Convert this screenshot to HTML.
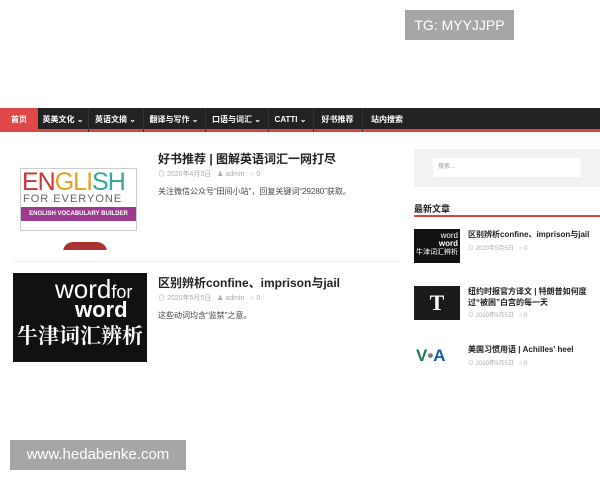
<!DOCTYPE html>
<html><head><meta charset="utf-8"><style>
*{margin:0;padding:0;box-sizing:border-box}
body{width:600px;height:480px;background:#fff;font-family:"Liberation Sans","Noto Sans CJK SC",sans-serif;position:relative;overflow:hidden}
.a{position:absolute}
.nav{left:0;top:108px;width:600px;height:24px;background:#222;border-bottom:3px solid #d44}
.nav span{position:absolute;top:0;height:24px;line-height:24px;color:#fff;font-size:8px;font-weight:bold;text-align:center}
.sep{position:absolute;top:0;width:1px;height:24px;background:#333}
.t{font-weight:bold;color:#222}
.m{color:#aaa;font-size:7px}
.e{color:#444;font-size:8px}
</style></head><body>
<div class="a" style="left:405px;top:10px;width:109px;height:30px;background:#a6a6a6;color:#fff;font-size:14px;line-height:30px;text-align:center">TG: MYYJJPP</div>
<div class="a nav">
<span style="left:0;width:38px;background:#e04848">首页</span>
<span style="left:38px;width:50px">英美文化 ⌄</span><div class="sep" style="left:88px"></div>
<span style="left:88px;width:55px">英语文摘 ⌄</span><div class="sep" style="left:143px"></div>
<span style="left:143px;width:62px">翻译与写作 ⌄</span><div class="sep" style="left:205px"></div>
<span style="left:205px;width:63px">口语与词汇 ⌄</span><div class="sep" style="left:268px"></div>
<span style="left:268px;width:45px">CATTI ⌄</span><div class="sep" style="left:313px"></div>
<span style="left:313px;width:49px">好书推荐</span><div class="sep" style="left:362px"></div>
<span style="left:362px;width:50px">站内搜索</span>
</div>
<div class="a" style="left:18px;top:149px;width:122px;height:101px;background:#fff;overflow:hidden">
<div class="a" style="left:2px;top:19px;width:117px;height:63px;border:1px solid #ccc"></div>
<div class="a" style="left:4px;top:19px;font-size:25px;color:#c33;letter-spacing:-1px">EN<span style="color:#e8a020">GLI</span><span style="color:#3a9">SH</span></div>
<div class="a" style="left:5px;top:44px;font-size:11px;color:#666;letter-spacing:1px">FOR EVERYONE</div>
<div class="a" style="left:3px;top:58px;width:115px;height:14px;background:#9b3a8e;color:#fff;font-size:6px;font-weight:bold;line-height:14px;text-align:center">ENGLISH VOCABULARY BUILDER</div>
<div class="a" style="left:45px;top:93px;width:44px;height:10px;border-radius:22px 22px 0 0;background:#a33"></div>
</div>
<div class="a t" style="left:158px;top:150px;font-size:12px">好书推荐 | 图解英语词汇一网打尽</div>
<div class="a m" style="left:158px;top:169px">⊙ 2020年4月3日 &nbsp; ♟ admin &nbsp; ○ 0</div>
<div class="a e" style="left:158px;top:186px">关注微信公众号“田间小站”，回复关键词“29280”获取。</div>
<div class="a" style="left:13px;top:261px;width:387px;height:1px;background:#eee"></div>
<div class="a" style="left:13px;top:273px;width:134px;height:89px;background:#111;color:#fff;overflow:hidden">
<div class="a" style="left:42px;top:3px;font-size:26px;line-height:26px;font-weight:300">word<span style="font-size:18px">for</span></div>
<div class="a" style="left:62px;top:26px;font-size:22px;font-weight:bold;line-height:22px">word</div>
<div class="a" style="left:4px;top:50px;font-size:21px;font-family:'Noto Serif CJK SC',serif;font-weight:bold;line-height:24px">牛津词汇辨析</div>
</div>
<div class="a t" style="left:158px;top:274px;font-size:12px">区别辨析confine、imprison与jail</div>
<div class="a m" style="left:158px;top:293px">⊙ 2020年5月5日 &nbsp; ♟ admin &nbsp; ○ 0</div>
<div class="a e" style="left:158px;top:310px">这些动词均含“监禁”之意。</div>
<div class="a" style="left:414px;top:149px;width:186px;height:38px;background:#f2f2f2"></div>
<div class="a" style="left:433px;top:158px;width:148px;height:19px;background:#fff;font-size:6px;color:#999;line-height:19px;padding-left:5px">搜索...</div>
<div class="a t" style="left:414px;top:202px;font-size:9px">最新文章</div>
<div class="a" style="left:414px;top:215px;width:186px;height:2px;background:#d44"></div>
<div class="a" style="left:414px;top:229px;width:46px;height:34px;background:#111;color:#fff;font-size:8px;text-align:right;line-height:8px;padding:3px 2px;overflow:hidden">word<br><b>word</b><br><span style="font-size:7px;line-height:10px">牛津词汇辨析</span></div>
<div class="a t" style="left:468px;top:229px;font-size:8px">区别辨析confine、imprison与jail</div>
<div class="a m" style="left:468px;top:243px;font-size:6px">⊙ 2020年5月5日 &nbsp; ○ 0</div>
<div class="a" style="left:414px;top:286px;width:46px;height:34px;background:#1a1a1a;color:#fff;font-size:22px;text-align:center;line-height:34px;font-family:'Liberation Serif',serif;font-weight:bold">T</div>
<div class="a t" style="left:468px;top:286px;font-size:8px;line-height:11px;width:130px">纽约时报官方译文 | 特朗普如何度过“被困”白宫的每一天</div>
<div class="a m" style="left:468px;top:310px;font-size:6px">⊙ 2020年5月5日 &nbsp; ○ 0</div>
<div class="a" style="left:416px;top:346px;font-size:17px;font-weight:bold;color:#1a7a5a">V<span style="color:#777">•</span><span style="color:#1a5aa0">A</span></div>
<div class="a t" style="left:468px;top:344px;font-size:8px">美国习惯用语 | Achilles' heel</div>
<div class="a m" style="left:468px;top:358px;font-size:6px">⊙ 2020年5月5日 &nbsp; ○ 0</div>
<div class="a" style="left:10px;top:440px;width:176px;height:30px;background:#a6a6a6;color:#fff;font-size:15px;line-height:30px;text-align:center">www.hedabenke.com</div>
</body></html>
